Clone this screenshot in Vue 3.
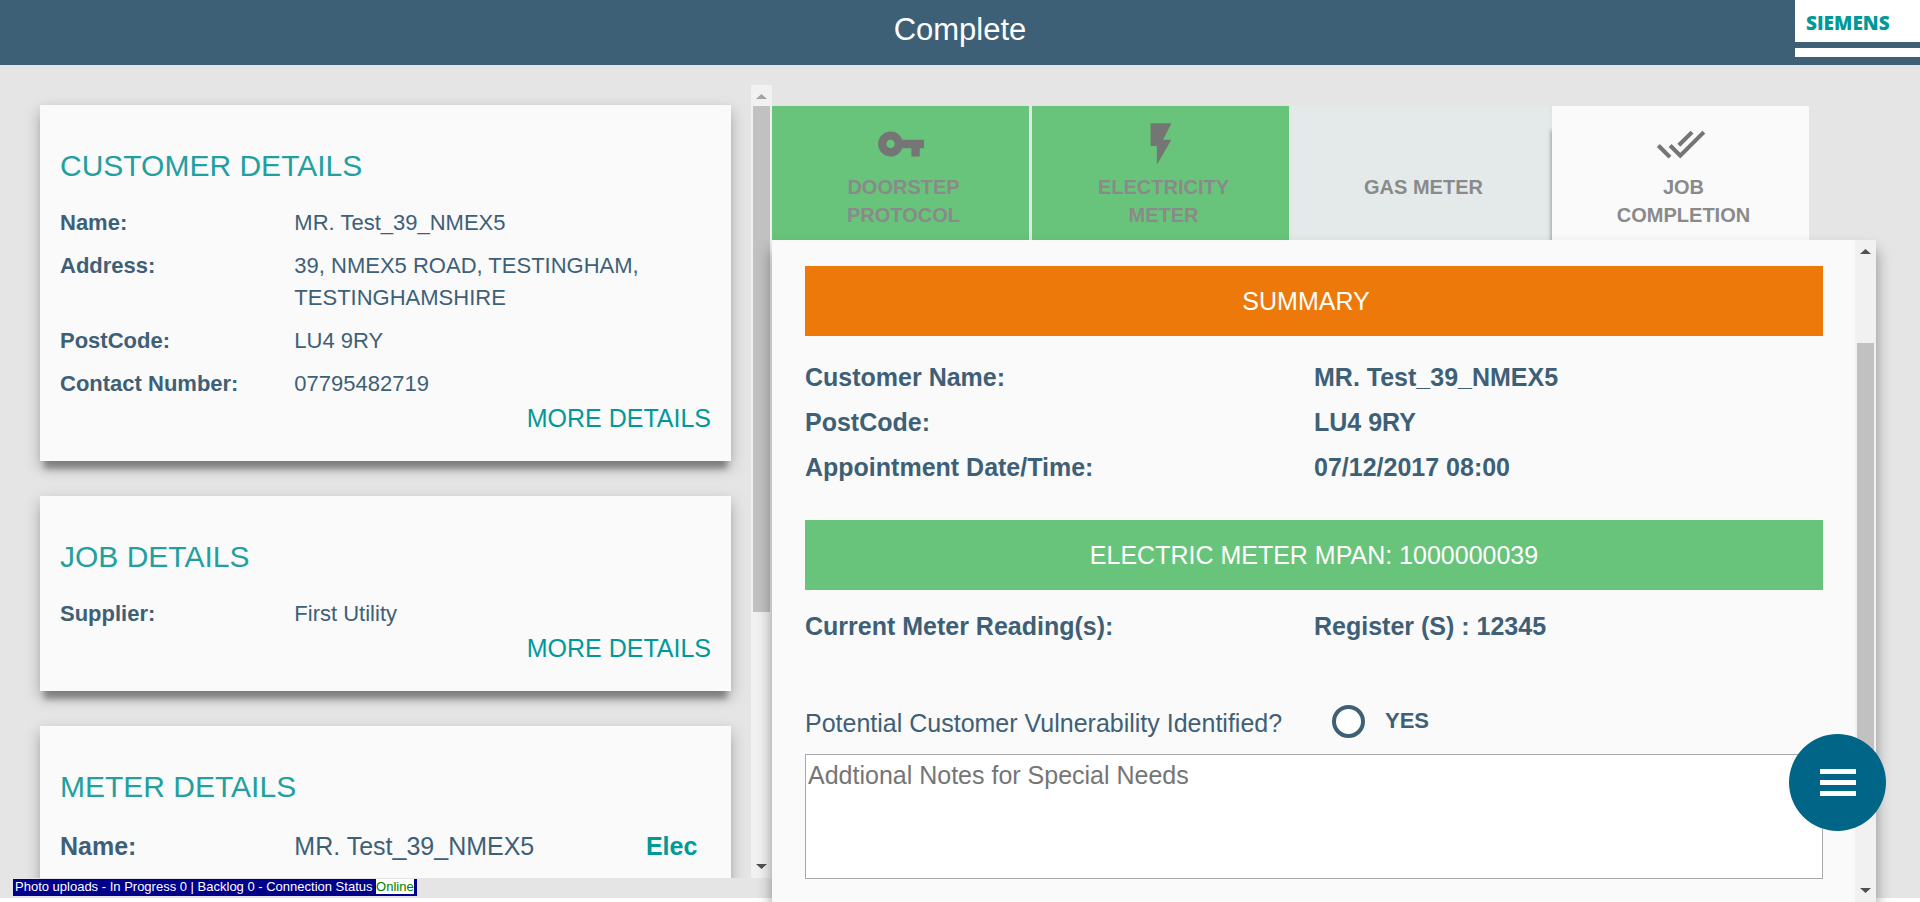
<script setup>
import { ref } from 'vue'

const detailCards = [
  {
    title: 'CUSTOMER DETAILS',
    rows: [
      { label: 'Name:', value: 'MR. Test_39_NMEX5' },
      { label: 'Address:', value: '39, NMEX5 ROAD, TESTINGHAM, TESTINGHAMSHIRE' },
      { label: 'PostCode:', value: 'LU4 9RY' },
      { label: 'Contact Number:', value: '07795482719' }
    ]
  },
  {
    title: 'JOB DETAILS',
    rows: [{ label: 'Supplier:', value: 'First Utility' }]
  }
]

const tabs = [
  {
    label: 'DOORSTEP PROTOCOL',
    state: 'done',
    icon: 'M12.65 10C11.83 7.67 9.61 6 7 6c-3.31 0-6 2.69-6 6s2.69 6 6 6c2.61 0 4.83-1.67 5.65-4H17v4h4v-4h2v-4H12.65zM7 14c-1.1 0-2-.9-2-2s.9-2 2-2 2 .9 2 2-.9 2-2 2z'
  },
  { label: 'ELECTRICITY METER', state: 'done', icon: 'M7 2v11h3v9l7-12h-4l4-8z' },
  { label: 'GAS METER', state: 'idle', icon: '' },
  {
    label: 'JOB COMPLETION',
    state: 'active',
    icon: 'M18 7l-1.41-1.41-6.34 6.34 1.41 1.41L18 7zm4.24-1.41L11.66 16.17 7.48 12l-1.41 1.41L11.66 19l12-12-1.42-1.41zM.41 13.41L6 19l1.41-1.41L1.83 12 .41 13.41z'
  }
]

const summary = [
  { label: 'Customer Name:', value: 'MR. Test_39_NMEX5' },
  { label: 'PostCode:', value: 'LU4 9RY' },
  { label: 'Appointment Date/Time:', value: '07/12/2017 08:00' }
]

const notes = ref('')
const vulnerable = ref('')
</script>

<template>
  <div class="app">
    <header class="header">
      <h1 class="title">Complete</h1>
      <div class="logo">
        <span class="logo-name">SIEMENS</span>
        <span class="logo-stripe"></span>
      </div>
    </header>

    <main class="main">
      <aside class="side">
        <div class="cards">
          <section v-for="card in detailCards" :key="card.title" class="card">
            <h2 class="card-title">{{ card.title }}</h2>
            <dl class="details">
              <div v-for="row in card.rows" :key="row.label" class="detail-row">
                <dt>{{ row.label }}</dt>
                <dd>{{ row.value }}</dd>
              </div>
            </dl>
            <a class="more" href="#">MORE DETAILS</a>
          </section>

          <section class="card">
            <h2 class="card-title">METER DETAILS</h2>
            <dl class="details">
              <div class="detail-row meter-row">
                <dt>Name:</dt>
                <dd>MR. Test_39_NMEX5</dd>
                <dd class="fuel">Elec</dd>
              </div>
            </dl>
          </section>
        </div>
        <div class="scroll side-scroll" aria-hidden="true">
          <svg class="arrow muted" viewBox="0 0 21 21"><path d="M5 14h11l-5.500-5z" /></svg>
          <div class="track"><div class="thumb"></div></div>
          <svg class="arrow" viewBox="0 0 21 21"><path d="M5 7h11l-5.500 5z" /></svg>
        </div>
      </aside>

      <div class="work">
        <nav class="tabs">
          <button v-for="tab in tabs" :key="tab.label" type="button" class="tab" :class="tab.state">
            <svg class="tab-icon" viewBox="0 0 24 24" aria-hidden="true"><path v-if="tab.icon" :d="tab.icon" /></svg>
            <span class="tab-label">{{ tab.label }}</span>
          </button>
        </nav>

        <section class="panel">
          <div class="panel-body">
            <h2 class="banner orange">SUMMARY</h2>
            <dl class="facts">
              <div v-for="item in summary" :key="item.label" class="fact">
                <dt>{{ item.label }}</dt>
                <dd>{{ item.value }}</dd>
              </div>
            </dl>
            <h2 class="banner green">ELECTRIC METER MPAN: 1000000039</h2>
            <dl class="facts reading">
              <div class="fact">
                <dt>Current Meter Reading(s):</dt>
                <dd>Register (S) : 12345</dd>
              </div>
            </dl>
            <div class="question" role="group" aria-labelledby="vulnerability">
              <span id="vulnerability">Potential Customer Vulnerability Identified?</span>
              <label class="choice">
                <input v-model="vulnerable" class="radio" type="radio" name="vulnerable" value="yes" />
                <span>YES</span>
              </label>
            </div>
            <textarea
              v-model="notes"
              class="notes"
              aria-label="Addtional Notes for Special Needs"
              placeholder="Addtional Notes for Special Needs"
            ></textarea>
          </div>
          <div class="scroll panel-scroll" aria-hidden="true">
            <svg class="arrow" viewBox="0 0 21 21"><path d="M5 14h11l-5.500-5z" /></svg>
            <div class="track"><div class="thumb"></div></div>
            <svg class="arrow" viewBox="0 0 21 21"><path d="M5 7h11l-5.500 5z" /></svg>
          </div>
        </section>
      </div>
    </main>

    <button class="fab" type="button" aria-label="Menu">
      <svg viewBox="0 0 36 27" aria-hidden="true">
        <path d="M0 0h36v5H0zM0 11h36v5H0zM0 22h36v5H0z" />
      </svg>
    </button>

    <div class="status">
      Photo uploads - In Progress 0 | Backlog 0 - Connection Status <span class="online">Online</span>
    </div>
  </div>
</template>

<style>
body {
  margin: 0;
  background: #fff;
}
</style>

<style scoped>
.app {
  display: flex;
  flex-direction: column;
  height: 100vh;
  overflow: hidden;
  font-family: Arial, "Liberation Sans", sans-serif;
  color: #3e6077;
}

h1,
h2,
dl,
dd {
  margin: 0;
  font-weight: 400;
}

.header {
  display: grid;
  grid-template-columns: 1fr auto 1fr;
  align-items: start;
  flex: none;
  height: 65px;
  background: #3e6077;
}

.title {
  grid-column: 2;
  font-size: 31px;
  line-height: 60px;
  color: #fff;
}

.logo {
  display: flex;
  flex-direction: column;
  justify-self: end;
  box-sizing: border-box;
  width: 125px;
  height: 57px;
  background: #fff;
}

.logo-name {
  padding-left: 11px;
  height: 42px;
  font: 800 19px/46px "Open Sans", sans-serif;
  color: #099;
}

.logo-stripe {
  height: 6px;
  background: #3e6077;
}

.main {
  display: grid;
  grid-template-columns: 193fr 287fr;
  flex: 1;
  min-height: 0;
  background: linear-gradient(#e5e5e5, #e5e5e5) 0 0 / 100% calc(100% - 4px) no-repeat;
}

.side {
  display: flex;
  min-height: 0;
  margin: 20px 0 24px;
  overflow: hidden;
}

.cards {
  display: flex;
  flex-direction: column;
  gap: 35px;
  flex: 1;
  padding: 20px 20px 0 40px;
  overflow: hidden;
}

.card {
  flex: none;
  padding: 43px 20px 27px;
  background: #fafafa;
  box-shadow: 0 12px 6px -4px rgba(0, 0, 0, 0.3), 0 6px 14px rgba(0, 0, 0, 0.28);
}

.card-title {
  margin-bottom: 23px;
  font-size: 30px;
  line-height: 36px;
  color: #22a0a0;
}

.details {
  display: grid;
  gap: 11px;
  font-size: 22px;
  line-height: 32px;
}

.detail-row {
  display: grid;
  grid-template-columns: 36% 1fr;
}

dt {
  font-weight: 700;
}

.meter-row {
  grid-template-columns: 36% 54% 1fr;
  font-size: 25px;
  line-height: 36px;
  padding-bottom: 40px;
}

.fuel {
  font-weight: 700;
  color: #099;
}

.more {
  display: block;
  margin-top: 2px;
  font-size: 25px;
  line-height: 32px;
  text-align: right;
  text-decoration: none;
  color: #099;
}

.scroll {
  display: flex;
  flex-direction: column;
  flex: none;
  width: 21px;
  background: #f1f1f1;
}

.arrow {
  flex: none;
  width: 21px;
  height: 21px;
  fill: #505050;
}

.muted {
  fill: #a3a3a3;
}

.track {
  flex: 1;
  padding: 0 2px;
}

.thumb {
  background: #c1c1c1;
}

.side-scroll .thumb {
  height: 67.4%;
}

.panel-scroll .track {
  display: flex;
  flex-direction: column;
  justify-content: flex-end;
}

.panel-scroll .thumb {
  height: 71%;
  margin-bottom: 98px;
}

.work {
  position: relative;
  display: flex;
  flex-direction: column;
  min-height: 0;
  padding: 41px 44px 0 0;
}

.tabs {
  display: grid;
  grid-template-columns: repeat(4, minmax(0, 1fr));
  gap: 3px;
  flex: none;
  height: 134px;
  padding-right: 67px;
}

.tab {
  display: flex;
  flex-direction: column;
  align-items: center;
  gap: 4px;
  padding: 13px 48px 0;
  border: 0;
  background: #e4eaea;
  font: 700 20px/28px Arial, "Liberation Sans", sans-serif;
  color: #8a8a8a;
}

.tab.done {
  background: #68c47a;
}

.tab.active {
  background: #fafafa;
  box-shadow: -3px 22px 4px -2px rgba(0, 0, 0, 0.3);
}

.tab-icon {
  flex: none;
  width: 50px;
  height: 50px;
  fill: #757575;
}

.tab-label {
  padding-left: 6px;
}

.panel {
  position: relative;
  display: flex;
  flex: 1;
  min-height: 0;
  background: #fafafa;
  box-shadow: 0 10px 14px rgba(0, 0, 0, 0.4);
}

.panel-body {
  flex: 1;
  padding: 26px 32px 0 33px;
  overflow: hidden;
}

.banner {
  font-size: 25px;
  line-height: 70px;
  text-align: center;
  color: #fff;
}

.orange {
  padding-right: 16px;
  background: #ec790a;
}

.green {
  background: #68c47a;
}

.facts {
  display: grid;
  gap: 13px;
  padding: 25px 0 37px;
  font-size: 25px;
  line-height: 32px;
}

.facts.reading {
  padding: 20px 0 62px;
}

.fact,
.question {
  display: grid;
  grid-template-columns: 1fr 1fr;
}

.fact dd {
  font-weight: 700;
}

.question {
  align-items: start;
  font-size: 25px;
  line-height: 38px;
}

.choice {
  display: flex;
  align-items: center;
  gap: 20px;
  padding-left: 18px;
  font-size: 22px;
  line-height: 34px;
  font-weight: 700;
}

.radio {
  appearance: none;
  box-sizing: border-box;
  width: 33px;
  height: 33px;
  margin: 0;
  border: 4px solid #3e6077;
  border-radius: 50%;
  background: #fff;
}

.notes {
  display: block;
  box-sizing: border-box;
  width: 100%;
  height: 125px;
  margin-top: 12px;
  padding: 2px;
  border: 1px solid #a9a9a9;
  background: #fff;
  font: 25px/36px Arial, "Liberation Sans", sans-serif;
  color: #3e6077;
  resize: none;
}

.notes::placeholder {
  color: #757575;
}

.fab {
  position: fixed;
  right: 34px;
  bottom: 71px;
  display: flex;
  align-items: center;
  justify-content: center;
  width: 97px;
  height: 97px;
  padding: 0;
  border: 0;
  border-radius: 50%;
  background: #006587;
}

.fab svg {
  width: 36px;
  height: 27px;
  fill: #fff;
}

.status {
  position: fixed;
  left: 13px;
  bottom: 6px;
  padding: 1px 3px 2px 2px;
  background: #00008b;
  font-size: 13px;
  line-height: 14px;
  color: #fff;
}

.online {
  background: #fff;
  color: #008000;
}
</style>
